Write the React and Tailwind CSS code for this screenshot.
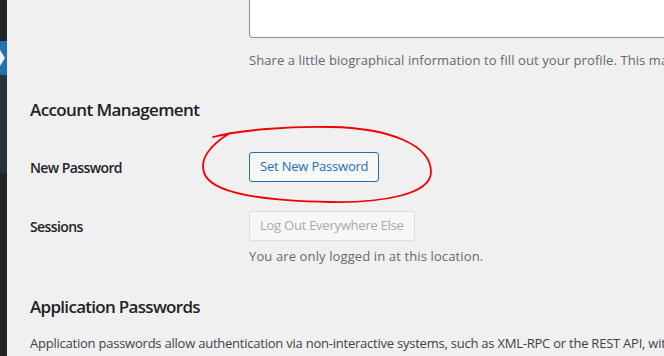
export default function App(){
  return (
    <div className="relative flex h-[356px] w-[664px] overflow-hidden bg-[#f0f0f1] font-['Open_Sans',sans-serif] text-[#3c434a]">
      <div className="flex w-[7px] shrink-0 flex-col">
        <div className="h-[41px] bg-[#1d2327]" />
        <div className="relative h-[34px] bg-[#2271b1]">
          <div className="absolute left-0 top-[9px] h-0 w-0 border-y-[8px] border-l-[5px] border-y-transparent border-l-[#f0f0f1]" />
        </div>
        <div className="h-[98px] bg-[#2c3338]" />
        <div className="flex-1 bg-[#1d2327]" />
      </div>

      <div className="min-w-0 flex-1 pl-[23px]">
        <div className="flex">
          <div className="w-[219px] shrink-0" />
          <div className="min-w-[500px]">
            <div className="h-[38px] w-[520px] rounded-b-[4px] border-x border-b border-[#8c8f94] bg-white" />
            <p className="mt-[12px] whitespace-nowrap text-[13px] leading-[20px] tracking-[0.08px] text-[#646970]">
              Share a little biographical information to fill out your profile. This may be shown publicly.
            </p>
          </div>
        </div>

        <h2 className="mt-[28px] text-[17px] font-semibold leading-[24px] tracking-[-0.6px] text-[#1d2327]">Account Management</h2>

        <div className="mt-[30px] flex items-center">
          <div className="w-[219px] shrink-0 text-[14px] font-semibold tracking-[-0.6px] text-[#1d2327]">New Password</div>
          <button className="h-[30px] rounded-[3px] border border-[#2271b1] bg-[#f6f7f7] px-[10px] text-[13px] tracking-[-0.2px] text-[#2271b1]">
            Set New Password
          </button>
        </div>

        <div className="mt-[29px] flex items-start">
          <div className="flex h-[30px] w-[219px] shrink-0 items-center text-[14px] font-semibold tracking-[-0.6px] text-[#1d2327]">Sessions</div>
          <div>
            <button disabled className="h-[30px] rounded-[3px] border border-[#dcdcde] bg-[#f6f7f7] px-[10px] text-[13px] tracking-[-0.25px] text-[#a7aaad]">
              Log Out Everywhere Else
            </button>
            <p className="mt-[5px] text-[13px] leading-[20px] tracking-[0.12px] text-[#646970]">You are only logged in at this location.</p>
          </div>
        </div>

        <h2 className="mt-[29px] text-[17px] font-semibold leading-[24px] tracking-[-0.7px] text-[#1d2327]">Application Passwords</h2>
        <p className="mt-[14px] whitespace-nowrap text-[13px] leading-[20px] tracking-[-0.23px]">
          Application passwords allow authentication via non-interactive systems, such as XML-RPC or the REST API, without providing your actual password.
        </p>
      </div>

      <svg className="pointer-events-none absolute left-0 top-0" width="664" height="356" viewBox="0 0 664 356" fill="none">
        <path
          d="M213 137 C240 130 290 126 330 127 C390 128 431 145 431 172 C431 195 380 203 330 202 C270 201 215 195 205 175 C198 160 210 145 230 133"
          stroke="#f00000" strokeWidth="1.8" strokeLinecap="round" />
      </svg>
    </div>
  )
}
